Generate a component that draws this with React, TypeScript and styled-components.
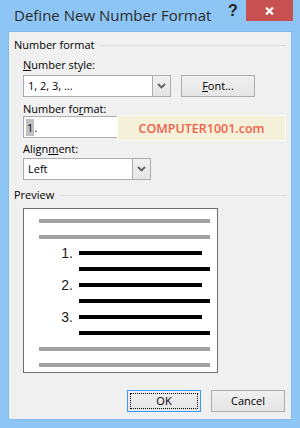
import React from "react";
import styled, { createGlobalStyle } from "styled-components";

const Global = createGlobalStyle`
  html, body { margin: 0; padding: 0; }
  body {
    background: #8dc6f5;
    font-family: "Open Sans", "Liberation Sans", Arial, sans-serif;
    font-size: 11px;
    color: #000;
  }
`;

const Window = styled.div`
  width: 300px;
  height: 428px;
  background: #8dc6f5;
  display: flex;
  flex-direction: column;
`;

const TitleBar = styled.div`
  height: 31px;
  display: flex;
  align-items: flex-start;
`;

const Title = styled.div`
  padding: 5px 0 0 14px;
  font-size: 15px;
  line-height: 20px;
  color: #2b2b2b;
  flex: 1;
  white-space: nowrap;
`;

const Help = styled.div`
  margin-top: 3px;
  width: 18px;
  font-family: "Liberation Sans", Arial, sans-serif;
  font-weight: bold;
  font-size: 16px;
  line-height: 16px;
  color: #222;
  text-align: left;
`;

const Close = styled.div`
  width: 47px;
  height: 21px;
  background: #c75050;
  margin-right: 7px;
  display: flex;
  align-items: center;
  justify-content: center;
`;

const Panel = styled.div`
  position: relative;
  box-sizing: border-box;
  width: 284px;
  height: 389px;
  margin-left: 8px;
  border: 1px solid #83bbea;
  background: #f0f0f0;
  padding: 6px 5px 0 5px;
  display: flex;
  flex-direction: column;
`;

const GroupHeader = styled.div<{ $mt?: number }>`
  height: 14px;
  margin-top: ${(p) => p.$mt ?? 0}px;
  display: flex;
  align-items: center;
  gap: 6px;
  line-height: 14px;
  white-space: nowrap;
  &::after {
    content: "";
    flex: 1;
    height: 1px;
    background: #dcdcdc;
  }
`;

const Label = styled.div<{ $mt: number }>`
  height: 14px;
  line-height: 14px;
  margin: ${(p) => p.$mt}px 0 0 9px;
  white-space: nowrap;
  u { text-decoration: underline; text-underline-offset: 1px; }
`;

const Row = styled.div<{ $mt: number }>`
  display: flex;
  gap: 10px;
  margin: ${(p) => p.$mt}px 0 0 9px;
`;

const Combo = styled.div<{ $w: number }>`
  box-sizing: border-box;
  width: ${(p) => p.$w}px;
  height: 22px;
  border: 1px solid #abadb3;
  background: #fff;
  display: flex;
`;

const ComboText = styled.div`
  flex: 1;
  padding-left: 4px;
  line-height: 20px;
  white-space: nowrap;
`;

const ComboArrow = styled.div`
  width: 17px;
  border-left: 1px solid #acacac;
  background: linear-gradient(#f0f0f0, #e5e5e5);
  display: flex;
  align-items: center;
  justify-content: center;
`;

const Button = styled.div<{ $focus?: boolean; $w?: number }>`
  position: relative;
  box-sizing: border-box;
  width: ${(p) => p.$w ?? 74}px;
  height: 22px;
  border: 1px solid ${(p) => (p.$focus ? "#3399ff" : "#adadad")};
  background: linear-gradient(#f0f0f0, #e5e5e5);
  display: flex;
  align-items: center;
  justify-content: center;
  line-height: 14px;
  u { text-decoration: underline; text-underline-offset: 1px; }
`;

const FocusRect = styled.span`
  position: absolute;
  inset: 2px;
  border: 1px dotted #000;
`;

const TextInput = styled.div`
  box-sizing: border-box;
  width: 148px;
  height: 22px;
  margin-left: 9px;
  border: 1px solid #abadb3;
  background: #fff;
  padding-left: 2px;
  display: flex;
  align-items: center;
`;

const Selected = styled.span`
  background: #c0c0c0;
  line-height: 17px;
  padding: 0 1px;
`;

const Watermark = styled.div`
  position: absolute;
  left: 108px;
  top: 83px;
  box-sizing: border-box;
  width: 169px;
  height: 26px;
  background: #f3f1da;
  border: 1px solid #fbfbf4;
  display: flex;
  align-items: center;
  justify-content: center;
  color: #f2604a;
  font-family: "Open Sans", sans-serif;
  font-weight: 600;
  font-size: 12.5px;
`;

const PreviewBox = styled.div`
  box-sizing: border-box;
  width: 195px;
  height: 165px;
  margin: 6px 0 0 9px;
  border: 1px solid #6e6e6e;
  background: #fff;
  padding: 10px 7px 0 15px;
  display: flex;
  flex-direction: column;
  gap: 12px;
`;

const Line = styled.div<{ $grey?: boolean; $w?: number; $ml?: number }>`
  height: 4px;
  background: ${(p) => (p.$grey ? "#a0a0a0" : "#000")};
  width: ${(p) => (p.$w ? `${p.$w}px` : "auto")};
  margin-left: ${(p) => p.$ml ?? 0}px;
`;

const NumRow = styled.div`
  height: 4px;
  display: flex;
  align-items: center;
`;

const Num = styled.span`
  width: 34px;
  margin-right: 6px;
  text-align: right;
  font-family: "Liberation Sans", Arial, sans-serif;
  font-size: 14px;
  line-height: 16px;
  color: #1a1a1a;
`;

const Buttons = styled.div`
  margin-top: 17px;
  padding-right: 1px;
  display: flex;
  justify-content: flex-end;
  gap: 10px;
`;

const Chevron = () => (
  <svg width="9" height="6" viewBox="0 0 9 6">
    <path d="M1 1 L4.5 4.5 L8 1" fill="none" stroke="#606060" strokeWidth="1.8" />
  </svg>
);

const items = [1, 2, 3];

export default function App() {
  return (
    <>
      <Global />
      <Window>
        <TitleBar>
          <Title>Define New Number Format</Title>
          <Help>?</Help>
          <Close>
            <svg width="9" height="8" viewBox="0 0 9 8">
              <path d="M1 0.5 L8 7.5 M8 0.5 L1 7.5" stroke="#fff" strokeWidth="2.2" />
            </svg>
          </Close>
        </TitleBar>
        <Panel>
          <GroupHeader>Number format</GroupHeader>
          <Label $mt={6}>
            <u>N</u>umber style:
          </Label>
          <Row $mt={3}>
            <Combo $w={148}>
              <ComboText>1, 2, 3, ...</ComboText>
              <ComboArrow>
                <Chevron />
              </ComboArrow>
            </Combo>
            <Button>
              <span>
                <u>F</u>ont...
              </span>
            </Button>
          </Row>
          <Label $mt={5}>
            Number fo<u>r</u>mat:
          </Label>
          <TextInput>
            <Selected>1</Selected>.
          </TextInput>
          <Label $mt={4}>
            Align<u>m</u>ent:
          </Label>
          <Row $mt={2}>
            <Combo $w={128}>
              <ComboText>Left</ComboText>
              <ComboArrow>
                <Chevron />
              </ComboArrow>
            </Combo>
          </Row>
          <GroupHeader $mt={8}>Preview</GroupHeader>
          <PreviewBox>
            <Line $grey />
            <Line $grey />
            {items.map((n) => (
              <React.Fragment key={n}>
                <NumRow>
                  <Num>{n}.</Num>
                  <Line $w={123} />
                </NumRow>
                <Line $ml={40} />
              </React.Fragment>
            ))}
            <Line $grey />
            <Line $grey />
          </PreviewBox>
          <Buttons>
            <Button $focus>
              <FocusRect />
              OK
            </Button>
            <Button>Cancel</Button>
          </Buttons>
          <Watermark>COMPUTER1001.com</Watermark>
        </Panel>
      </Window>
    </>
  );
}
